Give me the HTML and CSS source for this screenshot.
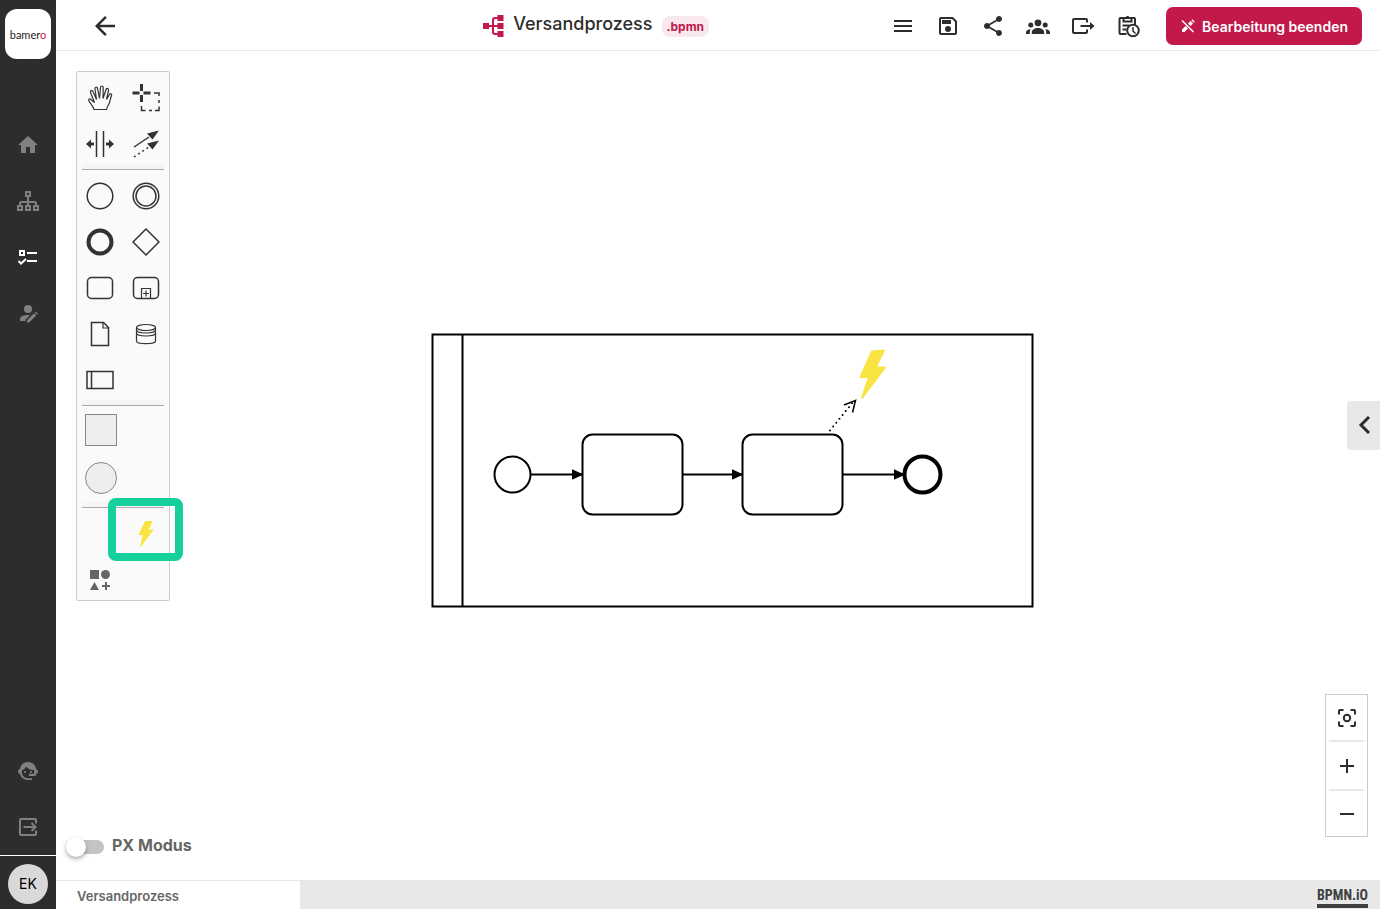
FILE: index.html
```html
<!DOCTYPE html>
<html lang="de">
<head>
<meta charset="utf-8">
<meta name="viewport" content="width=device-width, initial-scale=1">
<title>Versandprozess</title>
<link rel="stylesheet" href="styles.css">
</head>
<body>
<div class="app">
  <aside class="sidebar">
    <a class="logo" href="#"><span>bamer<span class="logo-accent">o</span></span></a>
    <nav class="side-nav" aria-label="Hauptnavigation">
      <a class="side-link" href="#" aria-label="Start"><svg class="icon" viewBox="0 0 24 24"><path d="M10 20v-6h4v6h5v-8h3L12 3 2 12h3v8z"/></svg></a>
      <a class="side-link" href="#" aria-label="Struktur"><svg class="icon line" viewBox="0 0 24 24"><path d="M10 3h4v4h-4zM2 17h4v4H2zM10 17h4v4h-4zM18 17h4v4h-4zM12 7v10M4 17v-2.500q0-1.500 1.500-1.500h13q1.500 0 1.500 1.500V17"/></svg></a>
      <a class="side-link active" href="#" aria-label="Aufgaben"><svg class="icon line" viewBox="0 0 24 24"><path d="M4 6h4v4H4zM11 8h10M11 16h10M2.500 16l2.500 2.500L10 14"/></svg></a>
      <a class="side-link" href="#" aria-label="Benutzer"><svg class="icon" viewBox="0 0 24 24"><circle cx="12" cy="8" r="4"/><path d="M4 20v-2c0-2.500 4-4 8-4 .7 0 1.400 0 2 .2L9.500 18.500V20zM11 21.500v-2.200l7-7 2.200 2.200-7 7zM18.700 11.600l1-1 2.200 2.200-1 1z"/></svg></a>
    </nav>
    <nav class="side-nav side-nav-bottom" aria-label="Konto">
      <a class="side-link" href="#" aria-label="Support"><svg class="icon" viewBox="0 0 24 24"><path d="M12 3C7.500 3 4.300 6 4 10.200c-1.200.3-2 1-2 2.300s.8 2.200 2 2.500C5 18.500 8 21 12 21h4v-1.800h-4c-3.500 0-6.200-2.700-6.200-6.200 0-.7.100-1.300.3-2C8.500 10.400 9.500 9 10 7.500c2 2.500 5 3.700 8 3.500.3 1.200.3 2.500 0 3.800h-5V17h6.400c.4-.7.600-1.300.8-2 1.200-.3 1.800-1.200 1.800-2.500s-.8-2-2-2.300C19.600 6 16.500 3 12 3z"/><circle cx="9" cy="13" r="1.100"/><circle cx="15" cy="13" r="1.100"/></svg></a>
      <a class="side-link" href="#" aria-label="Abmelden"><svg class="icon line" viewBox="0 0 24 24"><path d="M20 8.500V5q0-1-1-1H5Q4 4 4 5v14q0 1 1 1h14q1 0 1-1v-3.500M7.500 12H19M15.500 8l4 4-4 4"/></svg></a>
    </nav>
    <div class="account"><button class="avatar" type="button">EK</button></div>
  </aside>

  <div class="workspace">
    <header class="topbar">
      <div class="topbar-start">
        <button class="icon-button back" type="button" aria-label="Zurück"><svg viewBox="0 0 24 24"><path d="M20 11H7.830l5.590-5.590L12 4l-8 8 8 8 1.410-1.410L7.830 13H20v-2z"/></svg></button>
      </div>
      <div class="document">
        <svg class="document-icon" viewBox="0 0 21 22"><path d="M0 8h6v6H0zM14.500 0H20.500v6h-6zM14.500 8H20.500v6h-6zM14.500 16H20.500v6h-6z"/><path class="wire" d="M6 11h9M15 3h-3q-2 0-2 2v12q0 2 2 2h3"/></svg>
        <h1 class="document-name">Versandprozess</h1>
        <span class="badge">.bpmn</span>
      </div>
      <div class="actions">
        <button class="icon-button" type="button" aria-label="Menü"><svg class="icon" viewBox="0 0 24 24"><path d="M3 18h18v-2H3v2zm0-5h18v-2H3v2zm0-7v2h18V6H3z"/></svg></button>
        <button class="icon-button" type="button" aria-label="Speichern"><svg class="icon" viewBox="0 0 24 24"><path class="stroke" d="M5 4h11.500L20 7.500V19q0 1-1 1H5q-1 0-1-1V5q0-1 1-1z"/><path d="M6 6h9v4H6z"/><circle cx="12" cy="15" r="3"/></svg></button>
        <button class="icon-button" type="button" aria-label="Teilen"><svg class="icon" viewBox="0 0 24 24"><path d="M18 16.080c-.76 0-1.440.3-1.960.77L8.910 12.700c.05-.23.09-.46.09-.7s-.04-.47-.09-.7l7.050-4.110c.54.5 1.250.81 2.040.81 1.660 0 3-1.340 3-3s-1.340-3-3-3-3 1.340-3 3c0 .24.04.47.09.7L8.040 9.810C7.500 9.310 6.790 9 6 9c-1.660 0-3 1.340-3 3s1.340 3 3 3c.79 0 1.500-.31 2.040-.81l7.120 4.160c-.05.21-.08.43-.08.65 0 1.610 1.310 2.920 2.920 2.920s2.920-1.310 2.920-2.920-1.310-2.920-2.920-2.920z"/></svg></button>
        <button class="icon-button" type="button" aria-label="Gruppen"><svg class="icon" viewBox="0 0 24 24"><circle cx="12" cy="8.800" r="3.400"/><circle cx="4.800" cy="11" r="2.500"/><circle cx="19.200" cy="11" r="2.500"/><path d="M5.800 20v-1.800c0-2.500 3-4.200 6.200-4.200s6.200 1.700 6.200 4.200V20zM0 20v-1.500c0-1.800 1.700-3 4.700-3.200-.7 1-.9 2-.9 3.200V20zM24 20v-1.500c0-1.800-1.700-3-4.700-3.200.7 1 .9 2 .9 3.200V20z"/></svg></button>
        <button class="icon-button" type="button" aria-label="Exportieren"><svg class="icon" viewBox="0 0 24 24"><path class="stroke" d="M16 8.500V6q0-1-1-1H3Q2 5 2 6v12q0 1 1 1h12q1 0 1-1v-2.500M9.500 12H20"/><path d="M19 8L23.500 12 19 16z"/></svg></button>
        <button class="icon-button" type="button" aria-label="Verlauf"><svg class="icon" viewBox="0 0 24 24"><path class="stroke" d="M10.500 20H4.500q-1 0-1-1V5q0-1 1-1h13.500q1 0 1 1v6M7.500 4v3.500h8V4M6.500 11.500h7M6.500 15.500h4"/><path d="M8.500 5V3.500h1.200a2 2 0 0 1 3.800 0h1.500V5z"/><circle class="stroke" cx="17" cy="16.500" r="5.800"/><path class="thin" d="M17 13v4l2.500 2.500"/></svg></button>
      </div>
      <button class="primary" type="button"><svg class="primary-icon" viewBox="0 0 16 16"><path d="M2 14v-2.500l3.500-3.500 2.500 2.500L4.500 14zM8 5.500l2.500-2.500 2.500 2.500L10.500 8zM11.300 2.200l1-1 2.500 2.500-1 1z"/><path class="slash" d="M2 2.500L13.500 14"/></svg>Bearbeitung beenden</button>
    </header>

    <main class="canvas">
      <svg class="diagram" viewBox="0 0 604 276" role="img" aria-label="Prozessdiagramm">
        <defs>
          <marker id="flow-end" viewBox="0 0 12 12" refX="11" refY="6" markerWidth="12" markerHeight="12" markerUnits="userSpaceOnUse" orient="auto"><path class="solid" d="M0 .5L12 6 0 11.500z"/></marker>
        </defs>
        <path d="M1.500 1.500h600v272h-600zM31.500 1.500v272"/>
        <circle cx="81.500" cy="141.500" r="18"/>
        <rect x="151.500" y="101.500" width="100" height="80" rx="10"/>
        <rect x="311.500" y="101.500" width="100" height="80" rx="10"/>
        <circle class="end-event" cx="491.500" cy="141.500" r="18"/>
        <path marker-end="url(#flow-end)" d="M99.500 141.500h52"/>
        <path marker-end="url(#flow-end)" d="M251.500 141.500h60"/>
        <path marker-end="url(#flow-end)" d="M411.500 141.500h62"/>
        <path class="dotted" d="M399 97.500L423 68"/>
        <path class="open-arrow" d="M413 72l11.500-4.500-3 12"/>
        <path class="bolt" d="M441 18.500l12-1-8.500 17h9.500L431 65l7-21h-8.500z"/>
      </svg>

      <div class="palette" role="toolbar" aria-label="Werkzeuge">
        <div class="palette-group">
          <button class="tool" type="button" aria-label="Hand"><svg viewBox="0 0 28 28"><path class="fine" d="M8 25.500C7 21.500 4.500 20 3 17 2 15 3.500 14 5.500 16L8.500 18.500 4.500 8.500C4 6.500 6 5.800 7 7.500l3.500 8L9 5C8.800 3 11 2.500 11.500 4.500l2 10L14.500 3.500c.2-2 2.600-2 2.700 0L17 14.500l3-9c.7-1.800 2.800-1.200 2.500.8L20.500 15.500l3-5c1-1.500 2.700-.5 2 1.200-1.200 2.800-1.500 5.800-2.500 8-.8 1.800-2 3-2.500 5.800z"/></svg></button>
          <button class="tool" type="button" aria-label="Lasso"><svg viewBox="0 0 28 28"><path class="cross" d="M9.500 0v7M9.500 11v7M.500 9h7M11.500 9h7"/><path class="medium" d="M9.500 22v4.500h4M17 26.500h3M23 26.500h4v-4M27 19v-3M27 12V9h-5"/></svg></button>
          <button class="tool" type="button" aria-label="Platz schaffen"><svg viewBox="0 0 28 28"><path class="medium" d="M10.500 1v26M17.500 1v26"/><path class="fill" d="M0 14l5-4.500v3h3v3H5v3zM28 14l-5-4.500v3h-3v3h3v3z"/></svg></button>
          <button class="tool" type="button" aria-label="Verbinden"><svg viewBox="0 0 28 28"><path class="medium" d="M2 17l15-10"/><path class="medium dash" d="M2 27l15-10"/><path class="fill" d="M27 .5L20.500 9.500 15 3.500zM27 10.500l-6.500 9L15 13.500z"/></svg></button>
        </div>
        <hr class="palette-rule">
        <div class="palette-group">
          <button class="tool" type="button" aria-label="Startereignis"><svg viewBox="0 0 28 28"><circle class="medium" cx="14" cy="14" r="12.800"/></svg></button>
          <button class="tool" type="button" aria-label="Zwischenereignis"><svg viewBox="0 0 28 28"><circle class="medium" cx="14" cy="14" r="12.800"/><circle class="medium" cx="14" cy="14" r="10"/></svg></button>
          <button class="tool" type="button" aria-label="Endereignis"><svg viewBox="0 0 28 28"><circle class="heavy" cx="14" cy="14" r="11.500"/></svg></button>
          <button class="tool" type="button" aria-label="Gateway"><svg viewBox="0 0 28 28"><path class="medium" d="M14 1l13 13-13 13L1 14z"/></svg></button>
          <button class="tool" type="button" aria-label="Aufgabe"><svg viewBox="0 0 28 28"><rect class="medium" x="1.500" y="3.500" width="25" height="21" rx="4"/></svg></button>
          <button class="tool" type="button" aria-label="Teilprozess"><svg viewBox="0 0 28 28"><rect class="medium" x="1.500" y="3.500" width="25" height="21" rx="4"/><path class="fine" d="M9.500 24.500v-10h9v10M14 16.500v6M11 19.500h6"/></svg></button>
          <button class="tool" type="button" aria-label="Datenobjekt"><svg viewBox="0 0 28 28"><path class="medium" d="M5.500 2.500h12l5 5v18h-17z"/><path class="fine" d="M17 2.500v5.500h5.500"/></svg></button>
          <button class="tool" type="button" aria-label="Datenspeicher"><svg viewBox="0 0 28 28"><ellipse class="fine" cx="14" cy="7.500" rx="9.500" ry="3"/><path class="fine" d="M4.500 7.500V21c0 3.500 19 3.500 19 0V7.500M4.500 10c0 4 19 4 19 0M4.500 13c0 4 19 4 19 0"/></svg></button>
          <button class="tool" type="button" aria-label="Pool"><svg viewBox="0 0 28 28"><path class="medium" d="M1 5.500h26v17H1zM5.500 5.500v17"/></svg></button>
        </div>
        <hr class="palette-rule tight">
        <div class="palette-group shapes">
          <button class="tool shape" type="button" aria-label="Rechteck"><span class="swatch"></span></button>
          <button class="tool shape" type="button" aria-label="Kreis"><span class="swatch round"></span></button>
        </div>
        <hr class="palette-rule inset">
        <div class="palette-group custom">
          <button class="tool second" type="button" aria-label="Blitz"><svg viewBox="0 0 28 28"><path class="bolt-small" d="M13.500 1.500h6.500l-4 8.500h5L8.500 26.500l3-12h-4.500z"/></svg></button>
          <button class="tool" type="button" aria-label="Weitere Formen"><svg viewBox="0 0 28 28"><g class="more"><path d="M4 4h9v9H4zM4 24l4.500-8 4.500 8zM19 16h2v3h3v2h-3v3h-2v-3h-3v-2h3z"/><circle cx="19.500" cy="8.500" r="4.500"/></g></svg></button>
        </div>
        <div class="highlight"></div>
      </div>

      <button class="panel-toggle" type="button" aria-label="Eigenschaften öffnen"><svg class="icon" viewBox="0 0 24 24"><path class="chevron" d="M17 3L9 11l8 8"/></svg></button>

      <div class="zoom">
        <button class="zoom-button" type="button" aria-label="Einpassen"><svg viewBox="0 0 20 20"><circle cx="10" cy="10" r="3.200"/><path d="M2 6.500V3q0-1 1-1h3.500M13.500 2H17q1 0 1 1v3.500M18 13.500V17q0 1-1 1h-3.500M6.500 18H3q-1 0-1-1v-3.500"/></svg></button>
        <hr class="zoom-rule">
        <button class="zoom-button middle" type="button" aria-label="Vergrößern"><svg viewBox="0 0 20 20"><path d="M10 3v14M3 10h14"/></svg></button>
        <hr class="zoom-rule">
        <button class="zoom-button" type="button" aria-label="Verkleinern"><svg viewBox="0 0 20 20"><path d="M3 10h14"/></svg></button>
      </div>

      <label class="mode"><input class="switch" type="checkbox" role="switch">PX Modus</label>
    </main>

    <footer class="tabs">
      <button class="tab" type="button">Versandprozess</button>
      <a class="credit" href="#">BPMN.iO</a>
    </footer>
  </div>
</div>
</body>
</html>
```
FILE: styles.css
```css
* { box-sizing: border-box; }

body {
  margin: 0;
  font-family: Inter, "Open Sans", sans-serif;
  color: #2d2d2d;
  background: #fff;
}

button {
  padding: 0;
  border: 0;
  background: none;
  color: inherit;
  font: inherit;
  cursor: pointer;
}

hr { border: 0; margin: 0; }
svg { display: block; fill: currentColor; }
a { color: inherit; text-decoration: none; }

.icon { width: 24px; height: 24px; }
.line { fill: none; stroke: currentColor; stroke-width: 2; }
.stroke { fill: none; stroke: currentColor; stroke-width: 2; }
.thin { fill: none; stroke: currentColor; stroke-width: 1.5; }

.app {
  display: grid;
  grid-template-columns: 56px minmax(0, 1fr);
  min-height: 100vh;
}

/* Sidebar */
.sidebar {
  display: flex;
  flex-direction: column;
  background: #2d2d2d;
}

.logo {
  display: grid;
  place-items: center;
  height: 50px;
  margin: 9px 5px 0;
  border-radius: 12px;
  background: #fff;
  color: #222;
  font: 11px Lato, sans-serif;
}

.logo-accent { color: #c2184a; }

.side-nav {
  display: flex;
  flex-direction: column;
  margin-top: 58px;
}

.side-nav-bottom { margin-top: auto; }

.side-link {
  display: grid;
  place-items: center;
  height: 56px;
  color: #808080;
}

.side-link.active { color: #fff; }

.account {
  display: grid;
  place-items: center;
  height: 54px;
  border-top: 1px solid #fff;
  padding-top: 2px;
}

.avatar {
  width: 40px;
  height: 40px;
  border-radius: 50%;
  background: #d9d9d9;
  color: #000;
  font-size: 14px;
}

/* Top bar */
.workspace {
  display: flex;
  flex-direction: column;
  min-width: 0;
}

.topbar {
  display: grid;
  grid-template-columns: 23fr auto 10fr auto auto;
  align-items: center;
  height: 51px;
  padding: 2px 18px 0 34px;
  border-bottom: 1px solid #e8e8e8;
}

.topbar-start { grid-column: 1; }

.document {
  grid-column: 2;
  display: flex;
  align-items: center;
  gap: 9px;
}

.document-icon {
  width: 21px;
  height: 22px;
  color: #c2184a;
}

.wire { fill: none; stroke: currentColor; stroke-width: 2; }

.document-name {
  margin: 0 0 4px;
  font-size: 18px;
  line-height: 24px;
  font-weight: 500;
}

.badge {
  padding: 0 5px;
  border-radius: 8px;
  background: #f9e8ed;
  color: #c2184a;
  font-size: 12px;
  line-height: 21px;
  font-weight: 700;
}

.actions {
  grid-column: 4;
  display: flex;
  margin-right: 16px;
}

.icon-button {
  display: grid;
  place-items: center;
  width: 45px;
  height: 40px;
}

.icon-button.back { width: 30px; }
.back svg { width: 30px; height: 30px; }

.primary {
  grid-column: 5;
  display: flex;
  align-items: center;
  gap: 6px;
  height: 38px;
  padding: 0 14px;
  border-radius: 7px;
  background: #c2184a;
  color: #fff;
  font-size: 14px;
  font-weight: 600;
}

.primary-icon { width: 16px; height: 16px; }
.slash { stroke: #fff; stroke-width: 1.5; }

/* Canvas */
.canvas {
  position: relative;
  flex: 1;
  min-height: 600px;
}

.diagram {
  position: absolute;
  top: 282px;
  left: 375px;
  width: 604px;
  height: 276px;
  fill: none;
  stroke: #000;
  stroke-width: 2;
}

.diagram .end-event { stroke-width: 4; }
.diagram .solid { fill: #000; stroke: none; }
.diagram .dotted { stroke-dasharray: 0 5; stroke-linecap: round; }
.diagram .open-arrow { stroke-width: 1.5; }

.diagram .bolt {
  fill: #fae444;
  stroke: #fae444;
  stroke-linejoin: round;
}

.palette {
  position: absolute;
  top: 20px;
  left: 20px;
  width: 94px;
  padding-top: 3px;
  border: 1px solid #ccc;
  border-radius: 2px;
  background: #fafafa;
}

.palette-group {
  display: grid;
  grid-template-columns: repeat(2, 46px);
  grid-auto-rows: 46px;
}

.palette-group.shapes { grid-auto-rows: 48px; }
.palette-group.custom { margin-bottom: -3px; }

.tool {
  display: grid;
  place-items: center;
  color: #333;
}

.tool svg {
  width: 28px;
  height: 28px;
  fill: none;
  stroke: currentColor;
}

.tool.shape { grid-column: 1; padding-left: 2px; }
.tool.second { grid-column: 2; }

.fine { stroke-width: 1.2; }
.medium { stroke-width: 1.5; }
.cross { stroke-width: 3; }
.heavy { stroke-width: 4; }
.dash { stroke-dasharray: 2 3; }
.fill { fill: currentColor; stroke: none; }
.more { fill: #666; stroke: none; }
.bolt-small { fill: #fae444; stroke: #fae444; stroke-linejoin: round; }

.swatch {
  width: 32px;
  height: 32px;
  border: 1px solid #888;
  background: #eee;
}

.swatch.round { border-radius: 50%; }

.palette-rule {
  height: 6px;
  margin: -3px 5px 3px;
  border-bottom: 1px solid #aaa;
  background: #f5f5f5;
}

.palette-rule.tight { margin-bottom: 0; }
.palette-rule.inset { margin-top: 0; }

.highlight {
  position: absolute;
  top: 426px;
  left: 31px;
  width: 75px;
  height: 63px;
  border: 8px solid #15cf9c;
  border-radius: 8px;
  pointer-events: none;
}

.panel-toggle {
  position: absolute;
  top: 350px;
  right: 0;
  display: grid;
  place-items: center;
  width: 33px;
  height: 49px;
  border-radius: 4px 0 0 4px;
  background: #e8e8e8;
}

.chevron { fill: none; stroke: currentColor; stroke-width: 3; }

.zoom {
  position: absolute;
  right: 12px;
  bottom: 43px;
  width: 43px;
  border: 1px solid #ccc;
  background: #fff;
}

.zoom-button {
  display: grid;
  place-items: center;
  width: 100%;
  height: 45px;
}

.zoom-button.middle { height: 47px; }

.zoom-button svg {
  width: 20px;
  height: 20px;
  fill: none;
  stroke: currentColor;
  stroke-width: 2;
}

.zoom-rule {
  height: 2px;
  margin: 0 3px;
  background: #e8e8e8;
}

.mode {
  position: absolute;
  left: 10px;
  bottom: 23px;
  display: flex;
  align-items: center;
  gap: 8px;
  color: #666;
  font-size: 16px;
  line-height: 24px;
  font-weight: 700;
}

.switch {
  appearance: none;
  position: relative;
  width: 38px;
  height: 14px;
  margin: 3px 0 0;
  border-radius: 7px;
  background: linear-gradient(90deg, transparent 6px, #c4c4c4 6px);
}

.switch::before {
  content: "";
  position: absolute;
  top: -3px;
  left: 0;
  width: 20px;
  height: 20px;
  border-radius: 50%;
  background: #fff;
  box-shadow: 0 2px 4px rgba(0, 0, 0, .35);
}

.switch:checked::before { left: 18px; }

/* Footer tabs */
.tabs {
  display: flex;
  justify-content: space-between;
  height: 29px;
  border-top: 1px solid #e4e4ea;
  background: #e8e8e8;
}

.tab {
  width: 244px;
  padding: 2px 21px 0;
  background: #fff;
  color: #666;
  font-size: 13px;
  font-weight: 600;
  text-align: left;
}

.credit {
  margin: 5px 12px 1px 0;
  border-bottom: 4px solid #404040;
  color: #404040;
  font: 700 14px/18px "Liberation Sans Narrow", "Roboto Condensed", Roboto, sans-serif;
}
```
